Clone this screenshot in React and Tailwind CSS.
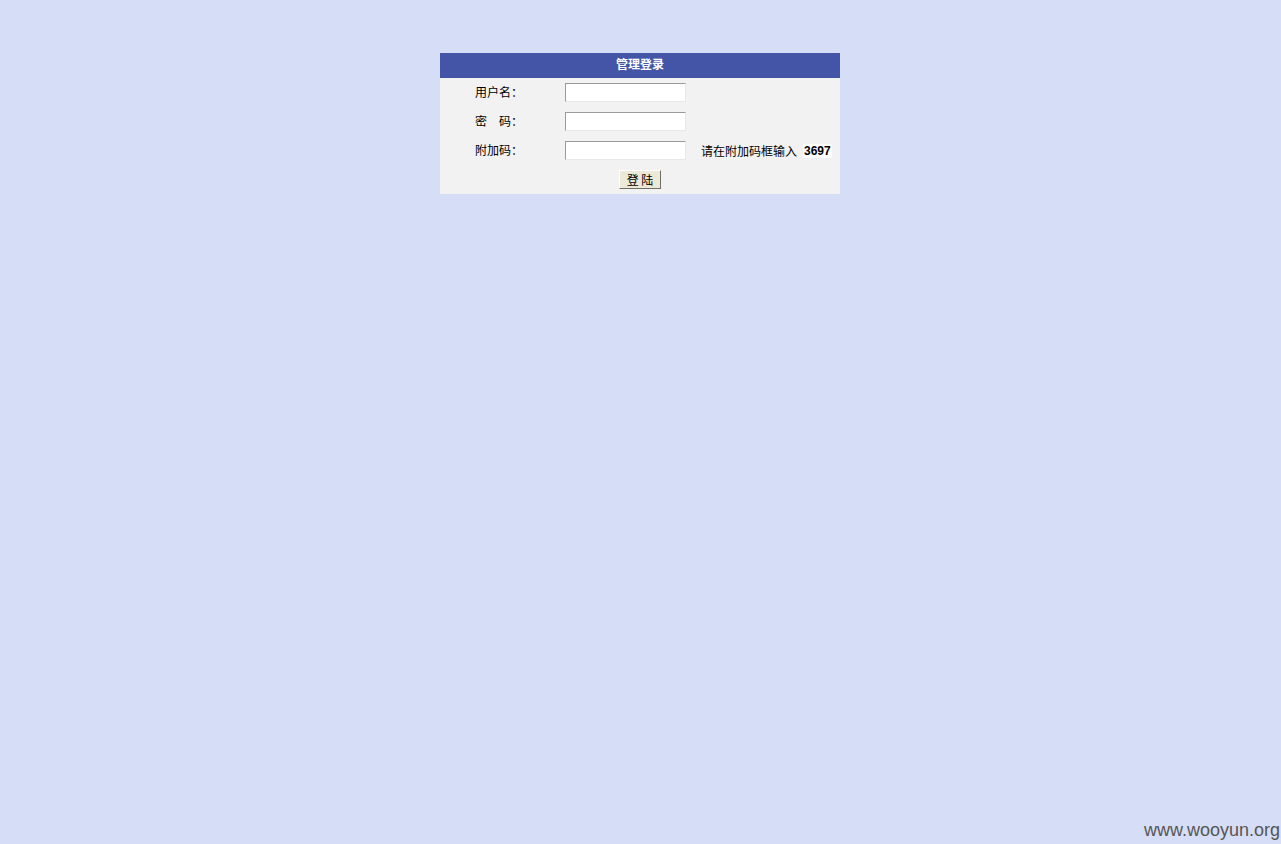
import React from 'react';

const Row = ({ label, children }) => (
  <div className="flex items-center h-[29px]">
    <div className="w-[125px] pl-[35px] pb-[2px] text-[12px] text-black whitespace-pre">{label}</div>
    {children}
  </div>
);

const inputClass = "w-[121px] h-[19px] bg-white border-t border-l border-t-[#9a9a9a] border-l-[#9a9a9a] border-b border-r border-b-[#e8e8e8] border-r-[#e8e8e8] outline-none px-1 text-[12px]";

export default function App() {
  return (
    <div className="relative min-h-[844px] bg-[#d6def7] pt-[53px] font-['Noto_Sans_CJK_SC',sans-serif] overflow-hidden">
      <div className="flex justify-center pr-px">
        <div className="w-[400px] bg-[#f2f2f2]">
          <div className="h-[25px] bg-[#4455a7] flex items-center justify-center pb-[3px] text-white text-[12px] font-bold">管理登录</div>
          <Row label="用户名：">
            <input type="text" className={inputClass} />
          </Row>
          <Row label={"密\u3000码："}>
            <input type="password" className={inputClass} />
          </Row>
          <Row label="附加码：">
            <input type="text" className={inputClass} />
            <span className="ml-[15px] text-[12px] text-black">请在附加码框输入</span>
            <span className="ml-[6px] bg-white px-[1px] text-[12px] font-bold text-black font-['Liberation_Sans',sans-serif] leading-[14px]">3697</span>
          </Row>
          <div className="flex items-center justify-center h-[29px]">
            <button type="button" className="w-[42px] h-[19px] bg-[#ece9d8] border border-t-white border-l-white border-b-[#716f64] border-r-[#716f64] text-[12px] text-black leading-none">登 陆</button>
          </div>
        </div>
      </div>
      <div className="absolute bottom-[0px] right-[1px] text-[18px] text-[#555] font-['Liberation_Sans',sans-serif]">www.wooyun.org</div>
    </div>
  );
}
